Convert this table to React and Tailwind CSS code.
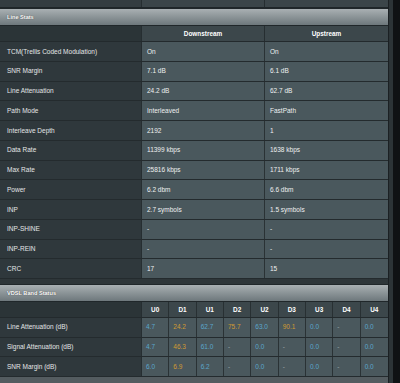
import React from "react";

const lineStats = [
  ["TCM(Trellis Coded Modulation)", "On", "On"],
  ["SNR Margin", "7.1 dB", "6.1 dB"],
  ["Line Attenuation", "24.2 dB", "62.7 dB"],
  ["Path Mode", "Interleaved", "FastPath"],
  ["Interleave Depth", "2192", "1"],
  ["Data Rate", "11399 kbps", "1638 kbps"],
  ["Max Rate", "25816 kbps", "1711 kbps"],
  ["Power", "6.2 dbm", "6.6 dbm"],
  ["INP", "2.7 symbols", "1.5 symbols"],
  ["INP-SHINE", "-", "-"],
  ["INP-REIN", "-", "-"],
  ["CRC", "17", "15"],
];

const bands = ["U0", "D1", "U1", "D2", "U2", "D3", "U3", "D4", "U4"];

const bandRows = [
  ["Line Attenuation (dB)", ["4.7", "24.2", "62.7", "75.7", "63.0", "90.1", "0.0", "-", "0.0"]],
  ["Signal Attenuation (dB)", ["4.7", "46.3", "61.0", "-", "0.0", "-", "0.0", "-", "0.0"]],
  ["SNR Margin (dB)", ["6.0", "6.9", "6.2", "-", "0.0", "-", "0.0", "-", "0.0"]],
];

const SectionHeader = ({ title, size }) => (
  <div className="h-[18px] flex items-center px-[7px] bg-linear-to-b from-[#a9b0b3] to-[#6e787c] border-y border-[#20272a]">
    <span className={`${size} font-bold text-white [text-shadow:0_0_1px_#333]`}>
      {title}
    </span>
  </div>
);

const bandColor = (band, v) => {
  if (v === "-") return "text-[#9aa6ab]";
  return band.startsWith("D") ? "text-[#d19a33]" : "text-[#5aa6cb]";
};

export default function App() {
  return (
    <div className="w-[400px] h-[383px] flex bg-[#101315] overflow-hidden font-['Liberation_Sans',Arial,sans-serif]">
      <div className="w-[388px] flex flex-col bg-[#30383b]">
        {/* tail of the previous table */}
        <div className="h-[8px] flex border-b border-[#1f2629]">
          <div className="w-[142px] bg-[#343d41] border-r border-[#262e31]" />
          <div className="w-[123px] bg-[#3b4549] border-r border-[#262e31]" />
          <div className="flex-1 bg-[#3b4549]" />
        </div>

        <SectionHeader title="Line Stats" size="text-[5.6px]" />

        <div className="h-[16px] flex border-b border-[#232a2d] text-[6.4px] text-white font-bold">
          <div className="w-[142px] bg-[#2b3437] border-r border-[#262e31]" />
          <div className="w-[123px] bg-[#3c474b] border-r border-[#262e31] flex items-center justify-center">
            Downstream
          </div>
          <div className="flex-1 bg-[#3c474b] flex items-center justify-center">
            Upstream
          </div>
        </div>

        {lineStats.map(([label, down, up]) => (
          <div
            key={label}
            className="h-[19.75px] flex border-b border-[#242b2e] text-[6.5px]"
          >
            <div className="w-[142px] bg-[#2f383c] border-r border-[#262e31] flex items-center pl-[7px] text-[#e4e6e7]">
              {label}
            </div>
            <div className="w-[123px] bg-[#4a585d] border-r border-[#2a3235] flex items-center pl-[5px] text-[#eef0f0]">
              {down}
            </div>
            <div className="flex-1 bg-[#4a585d] flex items-center pl-[5px] text-[#eef0f0]">
              {up}
            </div>
          </div>
        ))}

        <div className="h-[5px] bg-[#2e3639]" />

        <SectionHeader title="VDSL Band Status" size="text-[5.6px]" />

        <div className="h-[16px] grid grid-cols-[142px_repeat(9,1fr)] border-b border-[#232a2d] text-[6.4px] text-white font-bold">
          <div className="bg-[#2b3437] border-r border-[#262e31]" />
          {bands.map((b) => (
            <div
              key={b}
              className="bg-[#3c474b] border-r border-[#283033] last:border-r-0 flex items-center justify-center"
            >
              {b}
            </div>
          ))}
        </div>

        {bandRows.map(([label, vals]) => (
          <div
            key={label}
            className="h-[19.6px] grid grid-cols-[142px_repeat(9,1fr)] border-b border-[#242b2e] text-[6.5px]"
          >
            <div className="bg-[#2f383c] border-r border-[#262e31] flex items-center pl-[7px] text-[#e4e6e7]">
              {label}
            </div>
            {vals.map((v, i) => (
              <div
                key={i}
                className={`bg-[#4a585d] border-r border-[#2a3235] last:border-r-0 flex items-center pl-[4px] ${bandColor(bands[i], v)}`}
              >
                {v}
              </div>
            ))}
          </div>
        ))}

        <div className="flex-1 bg-[#545c60]" />
      </div>
      <div className="w-[5px] bg-[#2c3437] border-l border-[#1b2023]" />
      <div className="flex-1 bg-[#0f1214]" />
    </div>
  );
}
